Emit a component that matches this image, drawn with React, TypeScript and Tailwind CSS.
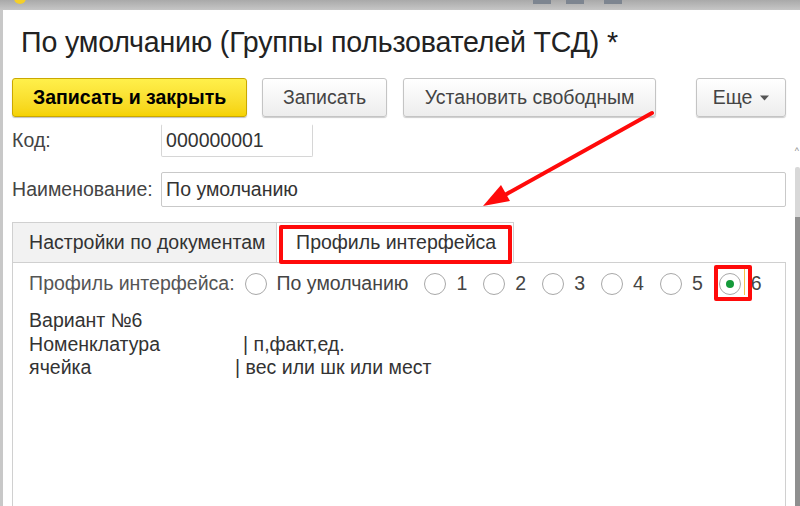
// Card form "По умолчанию (Группы пользователей ТСД)" — 1C-style window
// with annotation overlay (red arrow + highlight boxes).

const font = "font-['Liberation_Sans',Arial,sans-serif]";

function Button({ children, primary }: { children: React.ReactNode; primary?: boolean }) {
  return (
    <div
      className={
        primary
          ? 'h-[39px] flex items-center justify-center rounded-[3px] border border-[#caa800] bg-gradient-to-b from-[#fff04a] to-[#f5d200] shadow-[0_1px_1px_rgba(0,0,0,0.25)] text-[19.5px] font-bold text-black'
          : 'h-[39px] flex items-center justify-center rounded-[3px] border border-[#c4c4c4] bg-gradient-to-b from-white to-[#ededed] shadow-[0_1px_1px_rgba(0,0,0,0.2)] text-[19.5px] text-[#444]'
      }
    >
      {children}
    </div>
  );
}

function Radio({ label, checked, highlight }: { label: string; checked?: boolean; highlight?: boolean }) {
  return (
    <div className="flex items-center">
      <div className="relative">
        <div className="w-[22px] h-[22px] rounded-full border-[1.5px] border-[#a8a8a8] bg-white flex items-center justify-center">
          {checked && <div className="w-[8px] h-[8px] rounded-full bg-[#149a3a]" />}
        </div>
        {highlight && (
          <>
            <div className="absolute left-[25px] top-[-8px] w-[1px] h-[30px] bg-[#f5c24a]" />
            <div className="absolute left-[-5px] top-[-8px] w-[38px] h-[36px] border-[4px] border-[#ff0a0a] rounded-[2px]" />
          </>
        )}
      </div>
      <span className="ml-[10px] text-[19.5px] text-[#444]">{label}</span>
    </div>
  );
}

export default function App() {
  return (
    <div className={`relative w-[800px] h-[506px] overflow-hidden bg-white ${font}`}>
      {/* Window chrome */}
      <div className="relative h-[10px] bg-gradient-to-b from-[#a9a9a9] to-[#c6c6c6]">
        <div className="absolute left-[14px] top-[-8px] w-[12px] h-[12px] rounded-full bg-[#f4cf2a]" />
        <div className="absolute left-[533px] top-0 w-[18px] h-[4px] bg-[#7d8590]" />
        <div className="absolute left-[566px] top-0 w-[18px] h-[4px] bg-[#7d8590]" />
        <div className="absolute left-[604px] top-0 w-[18px] h-[4px] bg-[#7d8590]" />
      </div>

      <div className="flex h-[496px]">
        <div className="w-[4px] bg-[#c8c8c8]" />

        <div className="flex-1 pl-[9px] pr-[10px]">
          <div className="mt-[15px] ml-[9px] h-[34px] flex items-center text-[28.6px] text-[#222] tracking-[-0.2px]">
            По умолчанию (Группы пользователей ТСД) *
          </div>

          {/* Command bar */}
          <div className="mt-[19px] flex">
            <div className="w-[235px]"><Button primary>Записать и закрыть</Button></div>
            <div className="w-[125px] ml-[15px]"><Button>Записать</Button></div>
            <div className="w-[253px] ml-[16px]"><Button>Установить свободным</Button></div>
            <div className="w-[90px] ml-[40px]">
              <Button>
                <span>Еще</span>
                <svg width="9" height="6" viewBox="0 0 9 6" className="ml-[8px]">
                  <path d="M0 0.5h9L4.5 5.5z" fill="#555" />
                </svg>
              </Button>
            </div>
          </div>

          {/* Fields */}
          <div className="mt-[7px] flex items-center">
            <div className="w-[149px] text-[19.5px] text-[#444]">Код:</div>
            <div className="w-[152px] h-[33px] border border-[#d6d6d6] border-t-transparent rounded-[2px] flex items-center pl-[4px] text-[19.5px] text-[#333]">
              000000001
            </div>
          </div>
          <div className="mt-[15px] flex items-center">
            <div className="w-[149px] text-[19.5px] text-[#444]">Наименование:</div>
            <div className="flex-1 h-[35px] border border-[#c9c9c9] rounded-[2px] flex items-center pl-[4px] text-[19.5px] text-[#333]">
              По умолчанию
            </div>
          </div>

          {/* Tabs */}
          <div className="mt-[15px] flex h-[40px]">
            <div className="w-[265px] bg-[#f2f2f2] border border-[#d0d0d0] border-b-0 flex items-center pl-[16px] text-[19.5px] text-[#333]">
              Настройки по документам
            </div>
            <div className="relative w-[237px] bg-white border border-l-0 border-[#d0d0d0] border-b-0 flex items-center pl-[19px] text-[19.5px] text-[#333]">
              Профиль интерфейса
              <div className="absolute left-[2px] top-[2px] right-[1px] bottom-[-2px] border-[4px] border-[#ff0a0a] rounded-[2px]" />
            </div>
          </div>

          {/* Tab page */}
          <div className="h-[300px] border border-[#d0d0d0] border-b-0 pl-[16px] pt-[10px]">
            <div className="flex items-center h-[22px]">
              <span className="text-[19.5px] text-[#555] mr-[10px]">Профиль интерфейса:</span>
              <div className="flex items-center gap-[16px]">
                <Radio label="По умолчанию" />
                <Radio label="1" />
                <Radio label="2" />
                <Radio label="3" />
                <Radio label="4" />
                <Radio label="5" />
                <Radio label="6" checked highlight />
              </div>
            </div>

            <div className="mt-[14px] text-[19.5px] leading-[23.5px] text-[#333]">
              <div>Вариант №6</div>
              <div className="flex">
                <span className="w-[214px]">Номенклатура</span>
                <span>| п,факт,ед.</span>
              </div>
              <div className="flex">
                <span className="w-[206px]">ячейка</span>
                <span>| вес или шк или мест</span>
              </div>
            </div>
          </div>
        </div>

        {/* Scroll bar */}
        <div className="relative w-[5px]">
          <div className="absolute right-[1px] top-[137px] text-[9px] text-[#888] leading-none">^</div>
          <div className="absolute right-0 top-[157px] w-[5px] h-[50px] bg-[#d8d8d8] rounded-t-[2px]" />
          <div className="absolute right-0 top-[207px] bottom-0 w-[5px] bg-[#8f8f8f]" />
        </div>
      </div>

      {/* Annotation arrow */}
      <svg className="absolute inset-0 pointer-events-none" width="800" height="506">
        <line x1="652" y1="113" x2="503" y2="196" stroke="#ff0a0a" strokeWidth="4" strokeLinecap="round" />
        <polygon points="483,206 510,201 501,185" fill="#ff0a0a" />
      </svg>
    </div>
  );
}
